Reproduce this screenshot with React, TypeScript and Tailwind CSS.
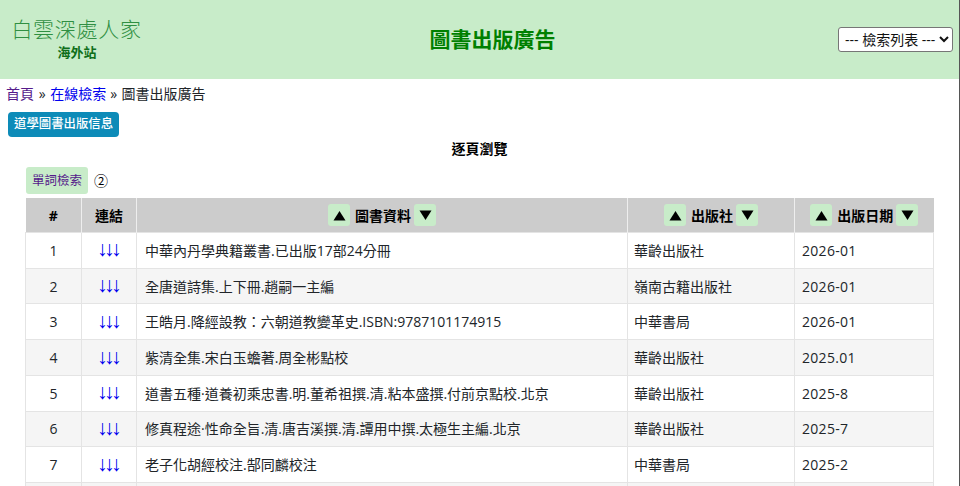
import React from 'react';

const rows = [
  ['1', '中華內丹學典籍叢書.已出版17部24分冊', '華齡出版社', '2026-01'],
  ['2', '全唐道詩集.上下冊.趙嗣一主編', '嶺南古籍出版社', '2026-01'],
  ['3', '王皓月.降經設教：六朝道教變革史.ISBN:9787101174915', '中華書局', '2026-01'],
  ['4', '紫清全集.宋白玉蟾著.周全彬點校', '華齡出版社', '2025.01'],
  ['5', '道書五種·道養初乘忠書.明.董希祖撰.清.粘本盛撰.付前京點校.北京', '華齡出版社', '2025-8'],
  ['6', '修真程途·性命全旨.清.唐吉溪撰.清.譚用中撰.太極生主編.北京', '華齡出版社', '2025-7'],
  ['7', '老子化胡經校注.郜同麟校注', '中華書局', '2025-2'],
];

const SortBtn = ({ up }: { up?: boolean }) => (
  <span className="inline-flex h-[22px] w-[22px] items-center justify-center rounded-[3px] bg-[#c8ecc9]">
    <svg width="13" height="11" viewBox="0 0 13 11">
      <path d={up ? 'M6.5 1 L12.5 10.5 L0.5 10.5 Z' : 'M0.5 0.5 L12.5 0.5 L6.5 10 Z'} fill="#000" />
    </svg>
  </span>
);

const SortHead = ({ label }: { label: string }) => (
  <div className="flex items-center justify-center">
    <SortBtn up />
    <span className="ml-[5px] mr-[3px]">{label}</span>
    <SortBtn />
  </div>
);

const App: React.FC = () => {
  return (
    <div className="h-[486px] w-[960px] overflow-hidden border-r border-[#555555] bg-white font-['Open_Sans','Noto_Sans_CJK_TC',sans-serif] text-[14px] text-[#212529]">
      <header className="flex h-[79px] items-center justify-between bg-[#c8ecc9] pl-[11px] pr-[6px]">
        <div className="h-[79px] w-[132px] pt-[14px] text-center font-['Noto_Sans_CJK_TC',serif] text-[#2f8f42]">
          <div className="-ml-[1px] whitespace-nowrap text-[21px] font-extralight leading-[28px] tracking-[0.7px]">白雲深處人家</div>
          <div className="mt-[2px] text-[13px] font-bold leading-[16px] text-[#0f6f1a]">海外站</div>
        </div>
        <h1 className="pl-[4px] pt-[1px] text-[21px] font-bold text-[#008000]">圖書出版廣告</h1>
        <select className="h-[25px] w-[115px] rounded-[3px] border border-[#767676] bg-white pl-[2px] text-[14px] text-[#111]">
          <option>--- 檢索列表 ---</option>
        </select>
      </header>

      <nav className="px-[6px] pt-[5px] text-[14px] leading-[20px]">
        <a className="text-[#551a8b]">首頁</a>
        <span className="mx-[1px]"> » </span>
        <a className="text-[#0000ee]">在線檢索</a>
        <span className="mx-[0.5px]"> » </span>
        圖書出版廣告
      </nav>

      <div className="mt-[8px] px-[8px]">
        <button className="h-[25px] rounded-[4px] bg-[#0d8bb8] px-[6px] text-[12.4px] font-medium text-white">道學圖書出版信息</button>
      </div>

      <div className="mt-[2px] text-center text-[14px] font-bold leading-[20px] text-black">逐頁瀏覽</div>

      <div className="mt-[8px] flex items-center pl-[26px]">
        <a className="rounded-[3px] bg-[#c8ecc9] px-[6px] py-[3px] text-[12.5px] leading-[21px] text-[#551a8b]">單詞檢索</a>
        <span className="ml-[6px] text-[14px] text-black">②</span>
      </div>

      <div className="mt-[4px] px-[25px]">
        <table className="w-[908px] table-fixed border-collapse">
          <colgroup>
            <col className="w-[56px]" />
            <col className="w-[55px]" />
            <col className="w-[491px]" />
            <col className="w-[167px]" />
            <col className="w-[139px]" />
          </colgroup>
          <thead>
            <tr className="h-[34.6px] bg-[#cccccc] text-[14px] font-bold text-black">
              <th className="border-x border-[#eeeeee] font-bold first:border-l-0 last:border-r-0">#</th>
              <th className="border-x border-[#eeeeee] font-bold">連結</th>
              <th className="border-x border-[#eeeeee] font-bold"><SortHead label="圖書資料" /></th>
              <th className="border-x border-[#eeeeee] font-bold"><SortHead label="出版社" /></th>
              <th className="border-x border-[#eeeeee] font-bold last:border-r-0"><SortHead label="出版日期" /></th>
            </tr>
          </thead>
          <tbody>
            {rows.map((r, i) => (
              <tr key={r[0]} className={i % 2 === 0 ? 'h-[35.7px] bg-white' : 'h-[35.7px] bg-[#f5f5f5]'}>
                <td className="border border-[#e4e4e4] text-center">{r[0]}</td>
                <td className="border border-[#e4e4e4] pb-[3px] pr-[3px] text-center font-['Liberation_Sans',sans-serif] text-[21px] leading-[21px] tracking-[-3.5px] text-[#0000ee]">↓↓↓</td>
                <td className="whitespace-nowrap border border-[#e4e4e4] pl-[8px]">{r[1]}</td>
                <td className="border border-[#e4e4e4] pl-[6px]">{r[2]}</td>
                <td className="border border-[#e4e4e4] pl-[7px] tracking-[0.3px]">{r[3]}</td>
              </tr>
            ))}
            <tr className="h-[35.7px] bg-[#f5f5f5]">
              <td className="border border-[#e4e4e4]" />
              <td className="border border-[#e4e4e4]" />
              <td className="border border-[#e4e4e4]" />
              <td className="border border-[#e4e4e4]" />
              <td className="border border-[#e4e4e4]" />
            </tr>
          </tbody>
        </table>
      </div>
    </div>
  );
};

export default App;
